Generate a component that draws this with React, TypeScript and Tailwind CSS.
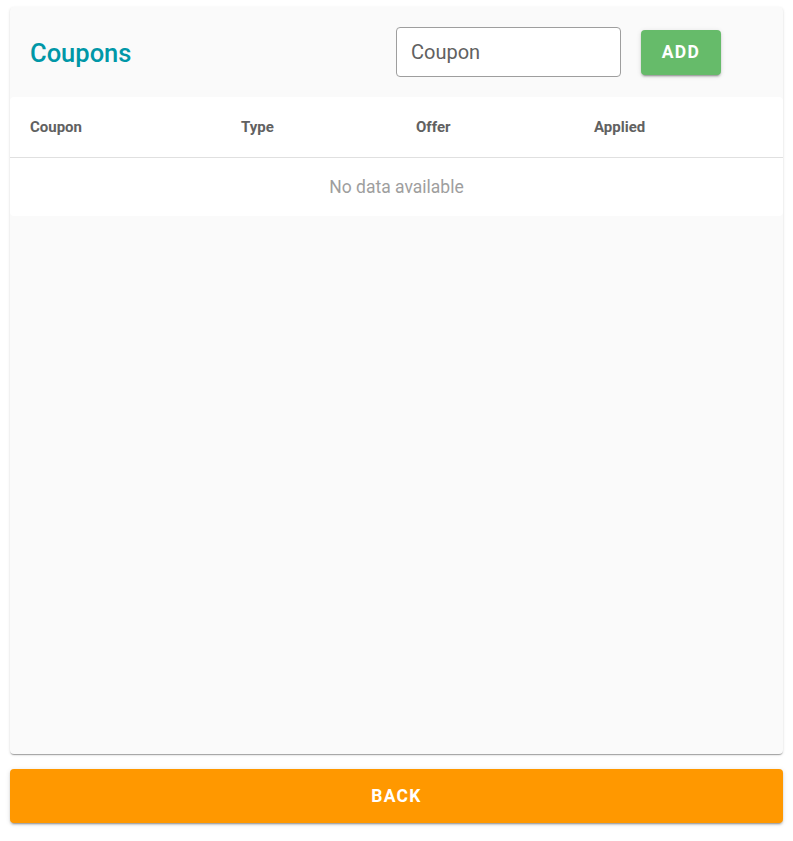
import React from "react";

export default function App() {
  return (
    <div className="w-[793px] h-[841px] bg-white px-[10px] pt-[7px]" style={{ fontFamily: "Roboto, 'Liberation Sans', sans-serif" }}>
      <div className="h-[747px] bg-[#fafafa] rounded-[4px] shadow-[0_2px_1px_-1px_rgba(0,0,0,0.2),0_1px_1px_0_rgba(0,0,0,0.14),0_1px_3px_0_rgba(0,0,0,0.12)] flex flex-col">
        <div className="h-[90px] flex items-center pl-[20px]">
          <div className="text-[25.5px] font-medium text-[#0097a7] w-[366px] mt-[2px]">Coupons</div>
          <div className="w-[225px] h-[50px] border border-[#9e9e9e] rounded-[4px] bg-white flex items-center px-[14px] text-[20px] text-[#616161]">Coupon</div>
          <button className="ml-[20px] w-[80px] h-[45px] bg-[#66bb6a] rounded-[4px] text-white text-[17.5px] font-bold tracking-[1.3px] shadow-[0_3px_1px_-2px_rgba(0,0,0,0.2),0_2px_2px_0_rgba(0,0,0,0.14),0_1px_5px_0_rgba(0,0,0,0.12)]">ADD</button>
        </div>
        <div className="bg-white rounded-[4px]">
          <div className="h-[61px] flex items-center border-b border-[#e0e0e0] text-[15px] font-bold text-[#616161] pl-[20px]">
            <div className="w-[211px]">Coupon</div>
            <div className="w-[175px]">Type</div>
            <div className="w-[178px]">Offer</div>
            <div>Applied</div>
          </div>
          <div className="h-[58px] flex items-center justify-center text-[17.5px] text-[#9e9e9e]">No data available</div>
        </div>
      </div>
      <button className="mt-[15px] w-full h-[54px] bg-[#ff9800] rounded-[4px] text-white text-[17.5px] font-bold tracking-[1.3px] shadow-[0_3px_1px_-2px_rgba(0,0,0,0.2),0_2px_2px_0_rgba(0,0,0,0.14),0_1px_5px_0_rgba(0,0,0,0.12)]">BACK</button>
    </div>
  );
}
